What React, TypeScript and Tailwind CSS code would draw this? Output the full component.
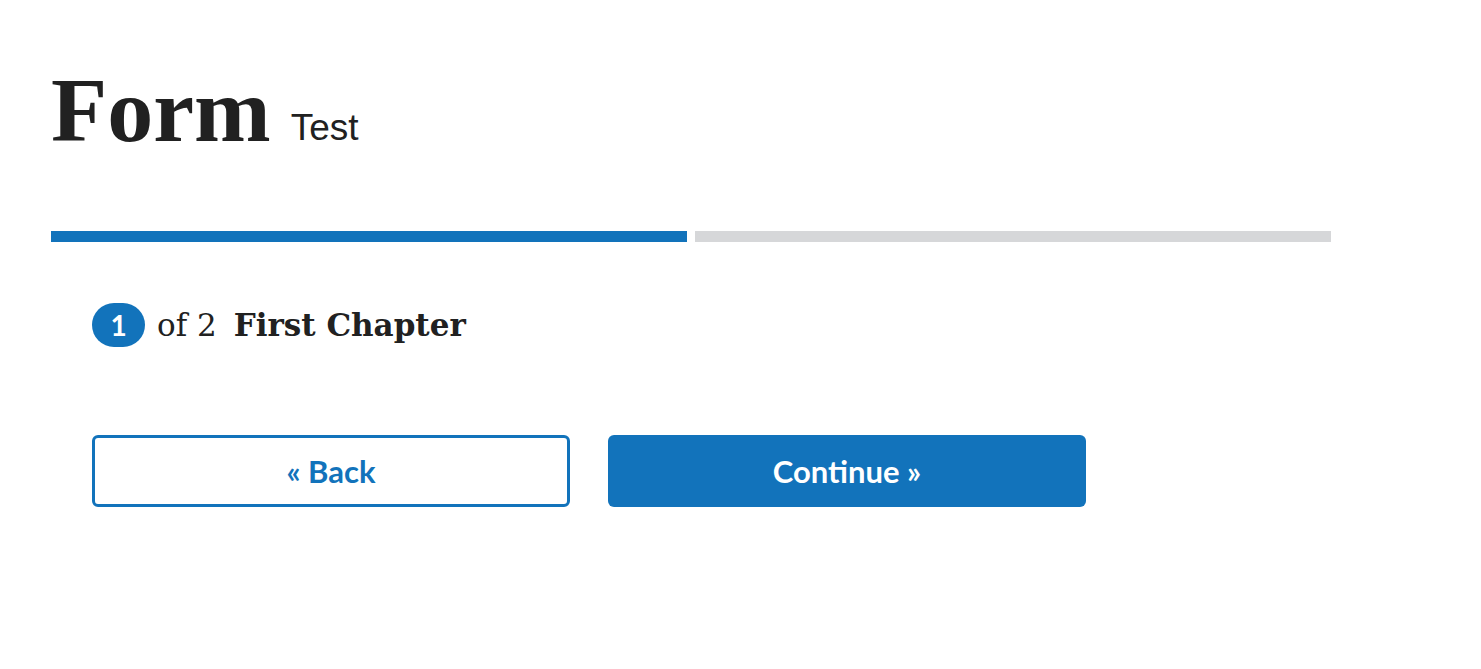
import React from "react";

export default function App() {
  return (
    <div className="min-h-[669px] w-full bg-white pl-[51px] pt-[64px] text-[#212121]">
      <h1
        className="m-0 h-[92px] whitespace-nowrap text-[92px] font-bold leading-[92px]"
        style={{ fontFamily: '"Liberation Serif", serif' }}
      >
        Form
        <span
          className="ml-[20px] align-[1px] text-[37px] font-normal leading-none"
          style={{ fontFamily: '"Liberation Sans", Arial, sans-serif' }}
        >
          Test
        </span>
      </h1>

      <div className="mt-[75px] flex w-[1280px] gap-[8px]">
        <div className="h-[11px] flex-1 bg-[#1273bb]" />
        <div className="h-[11px] flex-1 bg-[#d6d7d9]" />
      </div>

      <div className="pl-[41px]">
        <div className="mt-[61px] flex h-[44px] items-center">
          <div
            className="flex h-[44px] w-[53px] items-center justify-center rounded-full bg-[#1273bb] text-[28px] font-bold text-white"
            style={{ fontFamily: 'Lato, sans-serif' }}
          >
            1
          </div>
          <div
            className="ml-[12px] text-[31px] whitespace-nowrap"
            style={{ fontFamily: '"DejaVu Serif", serif' }}
          >
            <span className="font-normal">of 2</span>
            <span className="ml-[17px] font-bold">First Chapter</span>
          </div>
        </div>

        <div
          className="mt-[88px] flex gap-[38px]"
          style={{ fontFamily: 'Lato, sans-serif' }}
        >
          <button className="flex h-[72px] w-[478px] items-center justify-center rounded-[6px] border-[3px] border-[#1273bb] bg-white text-[31px] font-bold text-[#1273bb]">
            « Back
          </button>
          <button className="flex h-[72px] w-[478px] items-center justify-center rounded-[6px] bg-[#1273bb] text-[31px] font-bold text-white">
            Continue »
          </button>
        </div>
      </div>
    </div>
  );
}
